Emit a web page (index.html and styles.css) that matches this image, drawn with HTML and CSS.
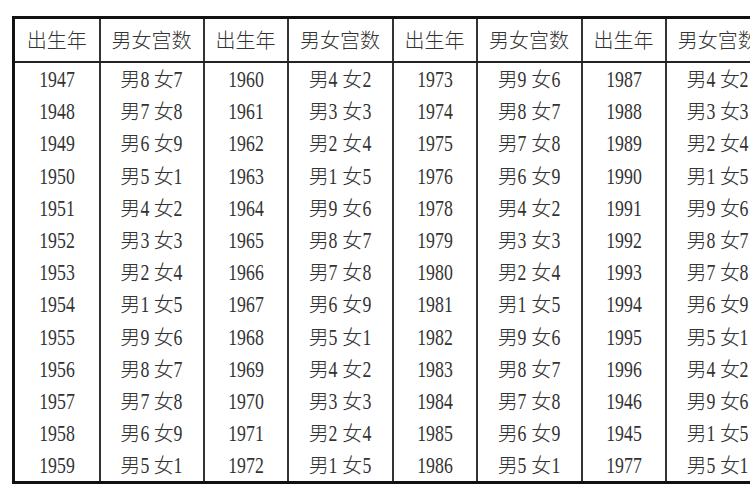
FILE: index.html
```html
<!DOCTYPE html>
<html lang="zh">
<head>
<meta charset="utf-8">
<title>男女宫数</title>
<link rel="stylesheet" href="styles.css">
</head>
<body>
<div class="wrap">
<table class="palace">
<colgroup>
<col class="c-year1"><col class="c-gong1">
<col class="c-year"><col class="c-gong">
<col class="c-year"><col class="c-gong">
<col class="c-year"><col class="c-gong">
</colgroup>
<thead>
<tr class="head">
<th>出生年</th><th>男女宫数</th><th>出生年</th><th>男女宫数</th><th>出生年</th><th>男女宫数</th><th>出生年</th><th>男女宫数</th>
</tr>
</thead>
<tbody>
<tr><td><span class="n">1947</span></td><td>男<span class="d">8</span> 女<span class="d">7</span></td><td><span class="n">1960</span></td><td>男<span class="d">4</span> 女<span class="d">2</span></td><td><span class="n">1973</span></td><td>男<span class="d">9</span> 女<span class="d">6</span></td><td><span class="n">1987</span></td><td>男<span class="d">4</span> 女<span class="d">2</span></td></tr>
<tr><td><span class="n">1948</span></td><td>男<span class="d">7</span> 女<span class="d">8</span></td><td><span class="n">1961</span></td><td>男<span class="d">3</span> 女<span class="d">3</span></td><td><span class="n">1974</span></td><td>男<span class="d">8</span> 女<span class="d">7</span></td><td><span class="n">1988</span></td><td>男<span class="d">3</span> 女<span class="d">3</span></td></tr>
<tr><td><span class="n">1949</span></td><td>男<span class="d">6</span> 女<span class="d">9</span></td><td><span class="n">1962</span></td><td>男<span class="d">2</span> 女<span class="d">4</span></td><td><span class="n">1975</span></td><td>男<span class="d">7</span> 女<span class="d">8</span></td><td><span class="n">1989</span></td><td>男<span class="d">2</span> 女<span class="d">4</span></td></tr>
<tr><td><span class="n">1950</span></td><td>男<span class="d">5</span> 女<span class="d">1</span></td><td><span class="n">1963</span></td><td>男<span class="d">1</span> 女<span class="d">5</span></td><td><span class="n">1976</span></td><td>男<span class="d">6</span> 女<span class="d">9</span></td><td><span class="n">1990</span></td><td>男<span class="d">1</span> 女<span class="d">5</span></td></tr>
<tr><td><span class="n">1951</span></td><td>男<span class="d">4</span> 女<span class="d">2</span></td><td><span class="n">1964</span></td><td>男<span class="d">9</span> 女<span class="d">6</span></td><td><span class="n">1978</span></td><td>男<span class="d">4</span> 女<span class="d">2</span></td><td><span class="n">1991</span></td><td>男<span class="d">9</span> 女<span class="d">6</span></td></tr>
<tr><td><span class="n">1952</span></td><td>男<span class="d">3</span> 女<span class="d">3</span></td><td><span class="n">1965</span></td><td>男<span class="d">8</span> 女<span class="d">7</span></td><td><span class="n">1979</span></td><td>男<span class="d">3</span> 女<span class="d">3</span></td><td><span class="n">1992</span></td><td>男<span class="d">8</span> 女<span class="d">7</span></td></tr>
<tr><td><span class="n">1953</span></td><td>男<span class="d">2</span> 女<span class="d">4</span></td><td><span class="n">1966</span></td><td>男<span class="d">7</span> 女<span class="d">8</span></td><td><span class="n">1980</span></td><td>男<span class="d">2</span> 女<span class="d">4</span></td><td><span class="n">1993</span></td><td>男<span class="d">7</span> 女<span class="d">8</span></td></tr>
<tr><td><span class="n">1954</span></td><td>男<span class="d">1</span> 女<span class="d">5</span></td><td><span class="n">1967</span></td><td>男<span class="d">6</span> 女<span class="d">9</span></td><td><span class="n">1981</span></td><td>男<span class="d">1</span> 女<span class="d">5</span></td><td><span class="n">1994</span></td><td>男<span class="d">6</span> 女<span class="d">9</span></td></tr>
<tr><td><span class="n">1955</span></td><td>男<span class="d">9</span> 女<span class="d">6</span></td><td><span class="n">1968</span></td><td>男<span class="d">5</span> 女<span class="d">1</span></td><td><span class="n">1982</span></td><td>男<span class="d">9</span> 女<span class="d">6</span></td><td><span class="n">1995</span></td><td>男<span class="d">5</span> 女<span class="d">1</span></td></tr>
<tr><td><span class="n">1956</span></td><td>男<span class="d">8</span> 女<span class="d">7</span></td><td><span class="n">1969</span></td><td>男<span class="d">4</span> 女<span class="d">2</span></td><td><span class="n">1983</span></td><td>男<span class="d">8</span> 女<span class="d">7</span></td><td><span class="n">1996</span></td><td>男<span class="d">4</span> 女<span class="d">2</span></td></tr>
<tr><td><span class="n">1957</span></td><td>男<span class="d">7</span> 女<span class="d">8</span></td><td><span class="n">1970</span></td><td>男<span class="d">3</span> 女<span class="d">3</span></td><td><span class="n">1984</span></td><td>男<span class="d">7</span> 女<span class="d">8</span></td><td><span class="n">1946</span></td><td>男<span class="d">9</span> 女<span class="d">6</span></td></tr>
<tr><td><span class="n">1958</span></td><td>男<span class="d">6</span> 女<span class="d">9</span></td><td><span class="n">1971</span></td><td>男<span class="d">2</span> 女<span class="d">4</span></td><td><span class="n">1985</span></td><td>男<span class="d">6</span> 女<span class="d">9</span></td><td><span class="n">1945</span></td><td>男<span class="d">1</span> 女<span class="d">5</span></td></tr>
<tr><td><span class="n">1959</span></td><td>男<span class="d">5</span> 女<span class="d">1</span></td><td><span class="n">1972</span></td><td>男<span class="d">1</span> 女<span class="d">5</span></td><td><span class="n">1986</span></td><td>男<span class="d">5</span> 女<span class="d">1</span></td><td><span class="n">1977</span></td><td>男<span class="d">5</span> 女<span class="d">1</span></td></tr>
</tbody>
</table>
</div>
</body>
</html>
```
FILE: styles.css
```css
html, body {
  margin: 0;
  padding: 0;
  background: #fff;
  overflow: hidden;
}
body {
  width: 750px;
  height: 500px;
  font-family: "Noto Sans CJK SC", "Liberation Serif", sans-serif;
  color: #333;
}
.wrap {
  padding: 16px 0 0 12px;
  width: 800px;
}
.palace {
  border-collapse: collapse;
  table-layout: fixed;
  width: 760px;
  border: 3px solid #111;
}
.c-year1 { width: 86px; }
.c-gong1 { width: 104px; }
.c-year { width: 84px; }
.c-gong { width: 105px; }
.palace th,
.palace td {
  border-left: 2px solid #333;
  border-right: 2px solid #333;
  padding: 0;
  text-align: center;
  white-space: nowrap;
  overflow: hidden;
}
.palace th {
  height: 42px;
  font-size: 20px;
  font-weight: 300;
  border-bottom: 2px solid #222;
  line-height: 42px;
}
.palace td {
  height: 32.2px;
  font-size: 20px;
  font-weight: 300;
  line-height: 32px;
  border-top: 0;
  border-bottom: 0;
}
.n {
  display: inline-block;
  font-family: "Liberation Serif", serif;
  font-weight: 400;
  font-size: 24px;
  transform: scaleX(0.74);
}
.d {
  display: inline-block;
  font-family: "Liberation Serif", serif;
  font-weight: 400;
  font-size: 24px;
  transform: scaleX(0.74);
  margin: 0 -1.5px;
}
```
